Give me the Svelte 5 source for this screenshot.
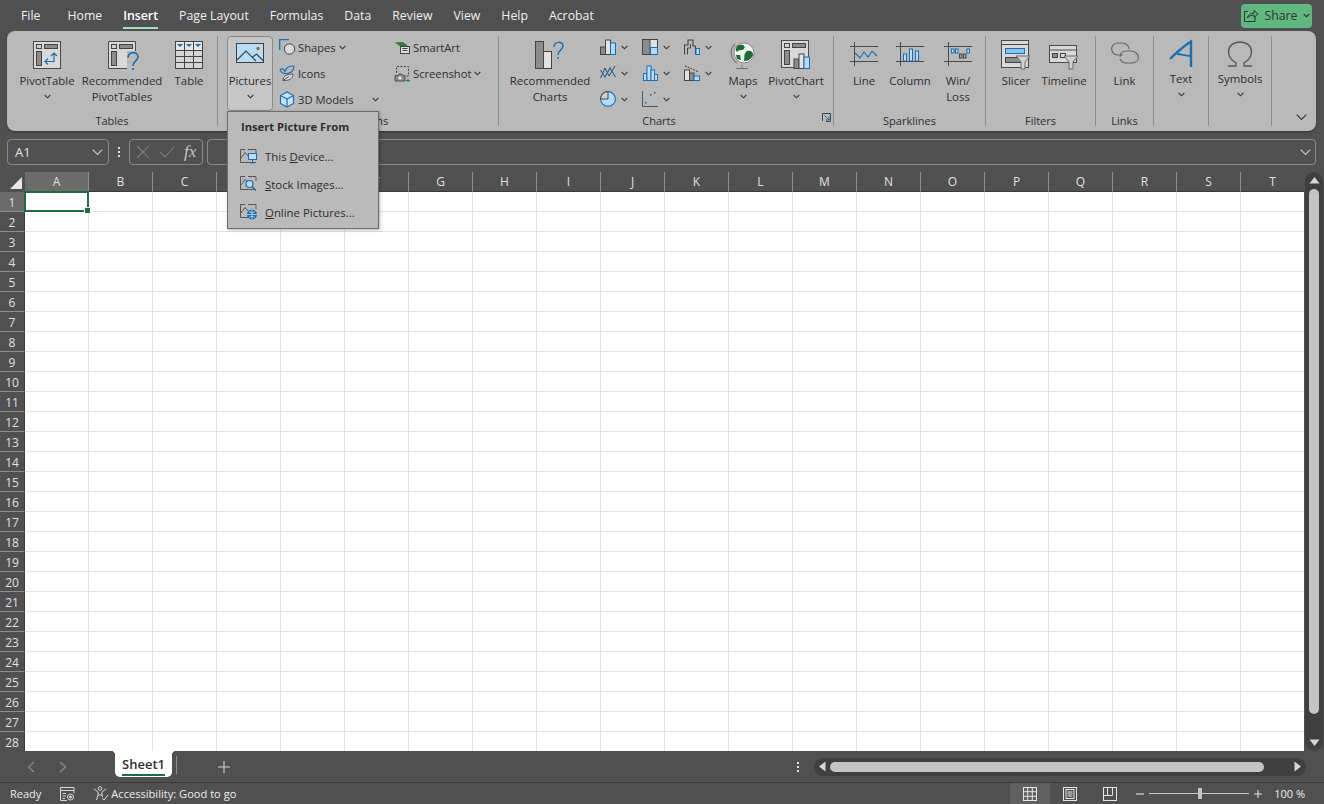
<script>
	const tabs = ['Home', 'Insert', 'Page Layout', 'Formulas', 'Data', 'Review', 'View', 'Help', 'Acrobat'];
	const cols = 'ABCDEFGHIJKLMNOPQRST'.split('');
	const rows = Array.from({ length: 28 }, (_, i) => i + 1);
</script>

{#snippet chev()}
	<svg class="chev" width="7" height="5" viewBox="0 0 7 5"><path d="M.7 1 3.5 3.8 6.3 1" fill="none" stroke="#3a3a3a" stroke-width="1.1" /></svg>
{/snippet}

{#snippet pivotFrame()}
	<rect x="3.5" y="3.5" width="5" height="4" fill="#cfcfcf" stroke="#444" />
	<rect x="11.5" y="3.5" width="13" height="4" fill="#8c8c8c" stroke="#444" />
	<rect x="3.5" y="10.5" width="5" height="14" fill="#8c8c8c" stroke="#444" />
{/snippet}

{#snippet miniPic()}
	<path d="M5 .5H.5V13.5H16" fill="none" stroke="#555" />
	<path d="M1 9 5 3.5 9 8 11 6" fill="none" stroke="#555" />
	<path d="M8 .5H16V5" fill="none" stroke="#555" />
{/snippet}

<div class="app">
	<header class="tabs">
		<span class="tab file">File</span>
		{#each tabs as t}
			<span class="tab" class:active={t === 'Insert'}>{t}</span>
		{/each}
		<button class="share">
			<svg width="16" height="15" viewBox="0 0 16 15" fill="none" stroke="#333"><path d="M5 3.5H1.5V13.5H12V8" /><path d="M4.5 10C5 7 7.5 5 11 5V2.5L15 6 11 9.5V7C8.5 7 6 8 4.5 10Z" /></svg>
			<span>Share</span>
			<svg width="7" height="5" viewBox="0 0 7 5"><path d="M.7 1 3.5 3.8 6.3 1" fill="none" stroke="#333" stroke-width="1.1" /></svg>
		</button>
	</header>

	<section class="ribbon">
		<div class="group tables">
			<div class="items">
				<div class="big w60">
					<svg class="ico" width="28" height="28" viewBox="0 0 28 28">
						<rect x=".5" y=".5" width="27" height="27" fill="#d9d9d9" stroke="#4a4a4a" />
						{@render pivotFrame()}
						<path d="M21 12v8.500H12M18 15l3-3 3 3M15 17.500l-3 3 3 3" fill="none" stroke="#1a6fb0" stroke-width="1.200" />
					</svg>
					<span>PivotTable</span>
					{@render chev()}
				</div>
				<div class="big w90">
					<svg class="ico" width="28" height="28" viewBox="0 0 28 28">
						<rect x=".5" y=".5" width="27" height="27" fill="#d9d9d9" />
						<path d="M27.500 10V.5H.5V27.500H19" fill="none" stroke="#4a4a4a" />
						<rect x="19" y="10" width="13" height="20" fill="#bababa" />
						{@render pivotFrame()}
						<path d="M20 17C20 10 30 10 30 16 30 20 25 20 25 25M25 27v2" fill="none" stroke="#1a6fb0" stroke-width="1.600" />
					</svg>
					<span>Recommended</span>
					<span>PivotTables</span>
				</div>
				<div class="big w44">
					<svg class="ico" width="28" height="28" viewBox="0 0 28 28">
						<rect x=".5" y=".5" width="27" height="27" fill="#d6d6d6" stroke="#444" />
						<rect x="1" y="1" width="26" height="8" fill="#e6e6e6" />
						<path d="M9.500 1V27M18.500 1V27M1 9.500H27M1 15.500H27M1 21.500H27" stroke="#444" fill="none" />
						<path d="M2 3H8L5 6ZM11 3H17L14 6ZM20 3H26L23 6Z" fill="#1a6fb0" />
					</svg>
					<span>Table</span>
				</div>
			</div>
			<div class="label">Tables</div>
		</div>

		<div class="group illus">
			<div class="items">
				<div class="big pictures">
					<svg class="ico" width="28" height="20" viewBox="0 0 28 20">
						<rect x=".5" y=".5" width="27" height="19" fill="#bcdcf6" stroke="#3f3f3f" />
						<path d="M1 17 10 8 20 18M16 14.500 20.500 11 27 17.500" fill="none" stroke="#2c4b66" stroke-width="1.200" />
						<circle cx="22" cy="5.500" r="1.700" fill="#9c6a2a" />
					</svg>
					<span>Pictures</span>
					{@render chev()}
				</div>
				<div class="smalls">
					<div class="small s1">
						<svg width="17" height="16" viewBox="0 0 17 16"><path d="M.7 11V.7H10" fill="none" stroke="#1a6fb0" stroke-width="1.300" /><circle cx="10.500" cy="10" r="5.200" fill="#dbdbdb" stroke="#444" /></svg>
						<span>Shapes</span>
						{@render chev()}
					</div>
					<div class="small s1">
						<svg width="17" height="16" viewBox="0 0 17 16"><path d="M1 5C3 2.500 5 4.500 6 6.500 7 2.500 10 .7 15 1 15 5 13 7 10 8 7 9.500 3 9 1 5Z" fill="none" stroke="#1a6fb0" stroke-width="1.100" /><path d="M4 15.500C4 11 8 9 14 9 14 13 11 16 4 15.500ZM4 15.500 10 11.500" fill="#d8d8d8" stroke="#555" /></svg>
						<span>Icons</span>
					</div>
					<div class="small s1 models">
						<svg width="17" height="17" viewBox="0 0 17 17"><path d="M8 1 14.500 4.500V12.500L8 16 1.500 12.500V4.500Z" fill="#c9e2f6" stroke="#1a6fb0" stroke-width="1.200" /><path d="M1.500 4.500 8 8 14.500 4.500M8 8V16" fill="none" stroke="#1a6fb0" stroke-width="1.200" /></svg>
						<span>3D Models</span>
						{@render chev()}
					</div>
				</div>
				<div class="smalls second">
					<div class="small s2">
						<svg width="17" height="15" viewBox="0 0 17 15"><path d="M.5 2.500 9 2 14 6 9 9 4.500 5Z" fill="#2f7d3b" /><rect x="6.500" y="6.500" width="9" height="7" fill="#dedede" stroke="#444" /><path d="M8.500 8.500h5M8.500 10.500h5" stroke="#444" /></svg>
						<span>SmartArt</span>
					</div>
					<div class="small s2">
						<svg width="17" height="17" viewBox="0 0 17 17"><path d="M2.500 8V1.500H14.500V11H12" fill="none" stroke="#444" stroke-dasharray="2 1.500" /><path d="M1 10.500H4L5 9H8L9 10.500H11V16H1Z" fill="#8a8a8a" stroke="#555" /><circle cx="6" cy="13" r="1.800" fill="#ddd" /><path d="M12 15.500h4M14 13.500v4" stroke="#2f7d3b" /></svg>
						<span>Screenshot</span>
						{@render chev()}
					</div>
				</div>
			</div>
			<div class="label">Illustrations</div>
		</div>

		<div class="group charts">
			<div class="items">
				<div class="big w90 rec">
					<svg class="ico" width="30" height="28" viewBox="0 0 30 28">
						<rect x=".5" y=".5" width="8" height="27" fill="#8c8c8c" stroke="#444" />
						<rect x="8.500" y="10.500" width="8" height="17" fill="#e2e2e2" stroke="#444" />
						<path d="M19 6C19 0 28 0 28 5 28 9 23 9 23 14M23 16v2" fill="none" stroke="#1a6fb0" stroke-width="1.500" />
					</svg>
					<span>Recommended</span>
					<span>Charts</span>
				</div>
				<div class="minis">
					<div class="mini">
						<svg width="16" height="16" viewBox="0 0 16 16"><rect x=".5" y="8" width="5" height="7.500" fill="#8c8c8c" stroke="#444" /><rect x="5.500" y="1" width="5" height="14.500" fill="#e2e2e2" stroke="#444" /><rect x="10.500" y="4" width="5" height="11.500" fill="#b6daf6" stroke="#1a6fb0" /></svg>
						{@render chev()}
					</div>
					<div class="mini">
						<svg width="16" height="16" viewBox="0 0 16 16"><rect x=".5" y=".5" width="15" height="15" fill="#e2e2e2" stroke="#444" /><rect x="1" y="1" width="7" height="14" fill="#8c8c8c" /><path d="M8 .5V15.500" stroke="#444" /><rect x="8.500" y="8.500" width="7" height="7" fill="#b6daf6" stroke="#1a6fb0" /></svg>
						{@render chev()}
					</div>
					<div class="mini">
						<svg width="16" height="16" viewBox="0 0 16 16"><path d="M.5 15.500V6H4V1H9V7H11.500V15.500" fill="none" stroke="#444" stroke-width="1.100" /><path d="M3.500 15.500V9H6.500V5" fill="none" stroke="#444" /><rect x="12" y="9.500" width="3.500" height="6" fill="#b6daf6" stroke="#1a6fb0" /></svg>
						{@render chev()}
					</div>
					<div class="mini">
						<svg width="16" height="16" viewBox="0 0 16 16"><path d="M.5 13 5 3 9 11 15 1" fill="none" stroke="#444" /><path d="M.5 5 5 12 10 3 15.500 12" fill="none" stroke="#1a6fb0" stroke-width="1.200" /></svg>
						{@render chev()}
					</div>
					<div class="mini">
						<svg width="16" height="16" viewBox="0 0 16 16" fill="#bcdcf6" stroke="#1a6fb0"><rect x="1.500" y="8.500" width="3.500" height="7" /><rect x="5" y="1" width="4" height="14.500" /><rect x="9" y="5" width="3.500" height="10.500" /><rect x="12.500" y="9.500" width="3" height="6" /></svg>
						{@render chev()}
					</div>
					<div class="mini">
						<svg width="16" height="16" viewBox="0 0 16 16"><path d="M1 1 15 7" stroke="#444" stroke-dasharray="2 1" fill="none" /><rect x=".5" y="5" width="5" height="10.500" fill="#e2e2e2" stroke="#444" /><rect x="5.500" y="8" width="4.500" height="7.500" fill="#8c8c8c" stroke="#444" /><rect x="10" y="11" width="5.500" height="4.500" fill="#b6daf6" stroke="#1a6fb0" /></svg>
						{@render chev()}
					</div>
					<div class="mini">
						<svg width="16" height="16" viewBox="0 0 16 16"><circle cx="8" cy="8" r="7.400" fill="#b6daf6" stroke="#1a6fb0" stroke-width="1.100" /><path d="M8 8V.6A7.400 7.400 0 0 0 .6 8Z" fill="#cfcfcf" stroke="#444" /></svg>
						{@render chev()}
					</div>
					<div class="mini">
						<svg width="16" height="16" viewBox="0 0 16 16"><path d="M.5 0V15.500H16" fill="none" stroke="#555" /><g fill="#94c4e8"><rect x="6" y="8" width="2" height="1.500" /><rect x="9" y="6" width="2" height="1.500" /></g><g fill="#555"><rect x="3" y="11" width="1.500" height="1.500" /><rect x="12" y="1" width="1.500" height="1.500" /><rect x="8" y="3" width="1.500" height="1.500" /></g></svg>
						{@render chev()}
					</div>
				</div>
				<div class="big w34 maps">
					<svg class="ico" width="26" height="30" viewBox="0 0 26 30">
						<path d="M5 4A12 12 0 0 0 7 23" fill="none" stroke="#777" stroke-width="1.200" />
						<path d="M12 25V28M6 28.500H18" stroke="#777" fill="none" />
						<circle cx="14" cy="13" r="10" fill="#eef3ee" stroke="#888" />
						<path d="M9 5C13 4 16 6 14 9 12 11 9 9 7 12 5 10 6 6 9 5ZM17 11C21 10 23 12 23 15 21 20 17 21 14 21 15 18 13 14 17 11ZM6 15 10 15 11 20 7 19Z" fill="#1d6b34" />
					</svg>
					<span>Maps</span>
					{@render chev()}
				</div>
				<div class="big w64 pchart">
					<svg class="ico" width="30" height="30" viewBox="0 0 30 30">
						<rect x=".5" y=".5" width="27" height="27" fill="#d9d9d9" stroke="#4a4a4a" />
						{@render pivotFrame()}
						<rect x="13" y="19" width="5" height="9.500" fill="#8c8c8c" stroke="#444" />
						<rect x="18" y="14" width="5" height="14.500" fill="#e2e2e2" stroke="#444" />
						<rect x="23" y="17" width="5.500" height="11.500" fill="#b6daf6" stroke="#1a6fb0" />
					</svg>
					<span>PivotChart</span>
					{@render chev()}
				</div>
				<svg class="launcher" width="9" height="9" viewBox="0 0 9 9" fill="none" stroke="#444"><path d="M.5 8V.5H8.500V8.500H4" /><path d="M2.500 2.500 7 7M7 3.500V7H3.500" stroke="#1a6fb0" /></svg>
			</div>
			<div class="label charts-label">Charts</div>
		</div>

		<div class="group sparks">
			<div class="items">
				<div class="big w44">
					<svg class="ico spark" width="28" height="24" viewBox="0 0 28 24" fill="none">
						<path d="M0 4.500H28M0 19.500H28M4.500 0V24" stroke="#4a4a4a" />
						<path d="M5 11 10 16 14 10 18 15 22 9 27 14" stroke="#1a6fb0" stroke-width="1.100" />
					</svg>
					<span>Line</span>
				</div>
				<div class="big w48">
					<svg class="ico spark" width="28" height="24" viewBox="0 0 28 24" fill="none">
						<path d="M0 4.500H28M0 19.500H28M4.500 0V24" stroke="#4a4a4a" />
						<g fill="#bcdcf6" stroke="#1a6fb0"><rect x="7.500" y="12" width="3" height="7" /><rect x="13.500" y="7" width="3" height="12" /><rect x="19.500" y="9" width="3" height="10" /></g>
					</svg>
					<span>Column</span>
				</div>
				<div class="big w48">
					<svg class="ico spark" width="28" height="24" viewBox="0 0 28 24" fill="none">
						<path d="M0 4.500H28M0 19.500H28M4.500 0V24" stroke="#4a4a4a" />
						<g fill="#bcdcf6" stroke="#1a6fb0"><rect x="7.500" y="7" width="2.500" height="4" /><rect x="11.500" y="7" width="2.500" height="4" /><rect x="23" y="7" width="2.500" height="4" /></g>
						<g fill="#a0a0a0" stroke="#444"><rect x="15.500" y="12" width="2.500" height="4" /><rect x="19.500" y="12" width="2.500" height="4" /></g>
					</svg>
					<span>Win/</span>
					<span>Loss</span>
				</div>
			</div>
			<div class="label">Sparklines</div>
		</div>

		<div class="group filters">
			<div class="items">
				<div class="big w44">
					<svg class="ico" width="30" height="30" viewBox="0 0 30 30">
						<rect x=".5" y=".5" width="27" height="27" fill="#d9d9d9" stroke="#4a4a4a" />
						<path d="M1 4.500H27" stroke="#4a4a4a" />
						<rect x="4.500" y="8.500" width="19" height="5" fill="#8fc4ee" stroke="#1a6fb0" />
						<rect x="4.500" y="17.500" width="15" height="5" fill="#8c8c8c" stroke="#444" />
						<path d="M15 16H29L24 22V29H20V22Z" fill="#d0d0d0" stroke="#6a6a6a" />
					</svg>
					<span>Slicer</span>
				</div>
				<div class="big w52">
					<svg class="ico timeline" width="30" height="25" viewBox="0 0 30 25">
						<rect x=".5" y=".5" width="27" height="17" fill="#d9d9d9" stroke="#4a4a4a" />
						<path d="M1 5H27" stroke="#4a4a4a" />
						<rect x="3.500" y="8.500" width="5" height="4" fill="#8c8c8c" stroke="#444" />
						<rect x="11.500" y="8.500" width="5" height="4" fill="#d9d9d9" stroke="#444" />
						<path d="M15 11H29L24 17V24H20V17Z" fill="#d0d0d0" stroke="#6a6a6a" />
					</svg>
					<span>Timeline</span>
				</div>
			</div>
			<div class="label">Filters</div>
		</div>

		<div class="group links">
			<div class="items center">
				<div class="big">
					<svg class="ico spark" width="28" height="24" viewBox="0 0 28 24" fill="none" stroke="#666" stroke-width="1.200">
						<path d="M12 13H7C3 13 .6 10 .6 7S3 1 7 1H11C15 1 18 3.500 18 7" />
						<path d="M9 15C9 11 12 9 16 9H20C24 9 27.400 12 27.400 15.500S24 21 20 21H15C12 21 10 19 9 17" />
					</svg>
					<span>Link</span>
				</div>
			</div>
			<div class="label">Links</div>
		</div>

		<div class="group text">
			<div class="items center">
				<div class="big tall">
					<svg class="ico" width="24" height="28" viewBox="0 0 24 28" fill="none" stroke="#1a6fb0" stroke-width="2.400">
						<path d="M1 19C8 12 15 6 22 1.500V27" />
						<path d="M8 14C12 14.500 17 15.500 21.500 16" stroke-width="1.800" />
					</svg>
					<span>Text</span>
					{@render chev()}
				</div>
			</div>
		</div>

		<div class="group symbols">
			<div class="items center">
				<div class="big tall">
					<svg class="ico" width="26" height="26" viewBox="0 0 26 26" fill="none" stroke="#5a5a5a" stroke-width="1.400">
						<path d="M1 25H9V22C4 19 1.500 16 1.500 11 1.500 5 6 1 13 1S24.500 5 24.500 11C24.500 16 22 19 17 22V25H25" />
					</svg>
					<span>Symbols</span>
					{@render chev()}
				</div>
			</div>
		</div>

		<div class="collapse">
			<svg width="11" height="7" viewBox="0 0 11 7"><path d="M.7.7 5.500 5.500 10.300.7" fill="none" stroke="#333" stroke-width="1.100" /></svg>
		</div>
	</section>

	<div class="formula">
		<div class="namebox">
			<span>A1</span>
			<svg width="11" height="7" viewBox="0 0 11 7"><path d="M.7.7 5.500 5.500 10.300.7" fill="none" stroke="#ccc" stroke-width="1.100" /></svg>
		</div>
		<div class="dots"><i></i><i></i><i></i></div>
		<div class="fxbox">
			<svg width="14" height="14" viewBox="0 0 14 14"><path d="M1 1 13 13M13 1 1 13" stroke="#7c7c7c" stroke-width="1.100" /></svg>
			<svg width="16" height="12" viewBox="0 0 16 12"><path d="M1 6 6 11 15 1" fill="none" stroke="#7c7c7c" stroke-width="1.100" /></svg>
			<span class="fx">fx</span>
		</div>
		<div class="input">
			<svg width="11" height="7" viewBox="0 0 11 7"><path d="M.7.7 5.500 5.500 10.300.7" fill="none" stroke="#ccc" stroke-width="1.100" /></svg>
		</div>
	</div>

	<main class="sheet">
		<div class="grid">
			<div class="corner"><svg width="12" height="12" viewBox="0 0 12 12"><path d="M12 0V12H0Z" fill="#e6e6e6" /></svg></div>
			{#each cols as c}
				<div class="colhead" class:on={c === 'A'}>{c}</div>
			{/each}
			{#each rows as r}
				<div class="rowhead" class:on={r === 1}>{r}</div>
				{#each cols as c}
					<div class="cell">
						{#if r === 1 && c === 'A'}<div class="selected"></div>{/if}
					</div>
				{/each}
			{/each}
		</div>
		<div class="vscroll">
			<svg width="11" height="8" viewBox="0 0 11 8"><path d="M5.500 1 10.500 7.500H.5Z" fill="#d6d6d6" /></svg>
			<div class="vthumb"></div>
			<svg width="11" height="8" viewBox="0 0 11 8"><path d="M5.500 7 10.500.5H.5Z" fill="#d6d6d6" /></svg>
		</div>
	</main>

	<div class="sheetbar">
		<svg class="nav" width="8" height="12" viewBox="0 0 8 12"><path d="M7 1 1.500 6 7 11" fill="none" stroke="#8f8f8f" stroke-width="1.100" /></svg>
		<svg class="nav next" width="8" height="12" viewBox="0 0 8 12"><path d="M1 1 6.500 6 1 11" fill="none" stroke="#8f8f8f" stroke-width="1.100" /></svg>
		<div class="sheettab"><span>Sheet1</span></div>
		<div class="tabsep"></div>
		<svg class="plus" width="12" height="12" viewBox="0 0 12 12"><path d="M6 0V12M0 6H12" stroke="#d0d0d0" stroke-width="1.100" /></svg>
		<div class="dots bar"><i></i><i></i><i></i></div>
		<div class="hscroll">
			<svg width="8" height="11" viewBox="0 0 8 11"><path d="M1 5.500 7.500.5V10.500Z" fill="#d6d6d6" /></svg>
			<div class="hthumb"></div>
			<svg width="8" height="11" viewBox="0 0 8 11"><path d="M7 5.500 .5.5V10.500Z" fill="#d6d6d6" /></svg>
		</div>
	</div>

	<footer class="status">
		<span class="ready">Ready</span>
		<svg class="macro" width="15" height="14" viewBox="0 0 15 14" fill="none" stroke="#d8d8d8"><path d="M7 13.500H.5V.5H14V6" /><path d="M1 3.500H14M2.500 6.500H6M2.500 9H6M2.500 11.500H5" /><circle cx="10.500" cy="10" r="3" fill="#555" /><circle cx="10.500" cy="10" r="1" fill="#d8d8d8" /></svg>
		<svg class="person" width="16" height="15" viewBox="0 0 16 15" fill="none" stroke="#d8d8d8"><circle cx="7" cy="2.500" r="1.800" /><path d="M1 3 5 6V9L3.500 14M13 3 9 6V9M5 9H9L9.500 11" /><path d="M9 12 11 14 15 9" /></svg>
		<span class="a11y">Accessibility: Good to go</span>
		<div class="views">
			<div class="view on">
				<svg width="14" height="14" viewBox="0 0 14 14" fill="none" stroke="#e6e6e6"><rect x=".5" y=".5" width="13" height="13" /><path d="M4.700 0V14M9.300 0V14M0 4.700H14M0 9.300H14" /></svg>
			</div>
			<div class="view">
				<svg width="14" height="14" viewBox="0 0 14 14" fill="none" stroke="#e6e6e6"><rect x=".5" y=".5" width="13" height="13" /><rect x="3" y="2.500" width="8" height="9" /><path d="M4.500 5H9.500M4.500 7H9.500M4.500 9H9.500" /></svg>
			</div>
			<div class="view">
				<svg width="14" height="14" viewBox="0 0 14 14" fill="none" stroke="#e6e6e6"><rect x=".5" y=".5" width="13" height="13" /><path d="M.5 8.500H9.500V0M4.500 0V8" /></svg>
			</div>
		</div>
		<div class="zoombar">
			<svg width="8" height="8" viewBox="0 0 8 8"><path d="M0 4H8" stroke="#e0e0e0" stroke-width="1.100" /></svg>
			<div class="slider"><div class="knob"></div></div>
			<svg width="8" height="8" viewBox="0 0 8 8"><path d="M0 4H8M4 0V8" stroke="#e0e0e0" stroke-width="1.100" /></svg>
		</div>
		<span class="pct">100 %</span>
	</footer>

	<div class="popup">
		<div class="poptitle">Insert Picture From</div>
		<div class="popitem">
			<svg width="17" height="15" viewBox="0 0 17 15">
				{@render miniPic()}
				<rect x="8.500" y="4.500" width="8" height="6" fill="#bcdcf6" stroke="#1a6fb0" /><path d="M12.500 10.500V13.500M10.500 14H14.500" stroke="#1a6fb0" />
			</svg>
			<span>This <u>D</u>evice...</span>
		</div>
		<div class="popitem">
			<svg width="17" height="16" viewBox="0 0 17 16">
				{@render miniPic()}
				<circle cx="9.500" cy="8" r="3.500" fill="#bcdcf6" stroke="#1a6fb0" stroke-width="1.200" /><path d="M12 10.500 16 14.500" stroke="#1a6fb0" stroke-width="1.400" />
			</svg>
			<span><u>S</u>tock Images...</span>
		</div>
		<div class="popitem">
			<svg width="17" height="16" viewBox="0 0 17 16">
				{@render miniPic()}
				<circle cx="12" cy="10.500" r="5" fill="#1a6fb0" /><path d="M7 10.500H17M12 5.500V15.500M9 7.500C11 9 13 9 15 7.500M9 13.500C11 12 13 12 15 13.500" stroke="#d6e8f6" stroke-width=".7" fill="none" />
			</svg>
			<span><u>O</u>nline Pictures...</span>
		</div>
	</div>
</div>

<style>
	:global(body) {
		margin: 0;
		background: #505050;
	}

	.app {
		position: relative;
		width: 1324px;
		height: 804px;
		overflow: hidden;
		display: flex;
		flex-direction: column;
		background: #505050;
		font-family: 'Open Sans', 'Noto Sans', sans-serif;
		font-size: 12px;
		color: #2e2e2e;
	}

	.tabs {
		height: 31px;
		flex: none;
		display: flex;
		align-items: center;
		gap: 21px;
		padding: 1px 0 0 21px;
		box-sizing: border-box;
		font-size: 12.300px;
		color: #efefef;
	}

	.tab {
		position: relative;
		line-height: 30px;
	}

	.tab.file {
		margin-right: 6px;
	}

	.tab.active {
		font-weight: 600;
		color: #fff;
	}

	.tab.active::after {
		content: '';
		position: absolute;
		left: 0;
		right: 0;
		bottom: 2px;
		height: 2px;
		background: #a3dcc0;
	}

	.share {
		margin: -1px 12px 0 auto;
		width: 71px;
		height: 24px;
		padding: 0;
		display: flex;
		align-items: center;
		justify-content: center;
		gap: 5px;
		border: 0;
		border-radius: 4px;
		background: #5fb87f;
		color: #333;
		font: inherit;
	}

	.ribbon {
		height: 100px;
		flex: none;
		margin: 0 8px 0 7px;
		border-radius: 8px;
		background: #b9b9b9;
		display: flex;
		box-shadow: 0 1px 2px rgba(0, 0, 0, 0.35);
	}

	.group {
		position: relative;
		height: 90px;
		margin-top: 5px;
		display: flex;
		flex-direction: column;
		box-sizing: border-box;
		border-right: 1px solid #8e8e8e;
	}

	.tables { width: 211px; }
	.illus { width: 281px; }
	.charts { width: 335px; }
	.sparks { width: 152px; }
	.filters { width: 110px; }
	.links { width: 58px; }
	.text { width: 55px; }
	.symbols { width: 63px; }

	.items {
		flex: 1;
		display: flex;
		min-height: 0;
	}

	.items.center {
		justify-content: center;
	}

	.tables .items { padding-left: 10px; }
	.illus .items { padding-left: 9px; }
	.charts .items { padding-left: 6px; position: relative; }
	.sparks .items { padding-left: 8px; }
	.filters .items { padding-left: 8px; }

	.label {
		height: 10px;
		line-height: 10px;
		text-align: center;
		white-space: nowrap;
		font-size: 11px;
	}

	.charts-label {
		padding-right: 14px;
	}

	.big {
		display: flex;
		flex-direction: column;
		align-items: center;
		box-sizing: border-box;
		padding-top: 4px;
		font-size: 11.400px;
		line-height: 16px;
		white-space: nowrap;
		flex: none;
	}

	.big .ico {
		height: 30px;
		margin-bottom: 3px;
		overflow: visible;
		flex: none;
	}

	.big .chev {
		margin-top: 5px;
	}

	.big.tall .ico {
		height: 28px;
		margin-bottom: 3px;
	}

	.big .spark {
		height: 24px;
		margin: 2px 0 7px;
	}

	.big .timeline {
		height: 25px;
		margin: 5px 0 3px;
	}

	.w34 { width: 34px; }
	.w44 { width: 44px; }
	.w48 { width: 48px; }
	.w52 { width: 52px; }
	.w60 { width: 60px; }
	.w64 { width: 64px; }
	.w90 { width: 90px; }

	.pictures {
		width: 46px;
		height: 75px;
		padding-top: 6px;
		background: #c6c6c6;
		border: 1px solid #8a8a8a;
		border-radius: 4px;
	}

	.pictures .ico {
		height: 20px;
		margin-bottom: 10px;
	}

	.smalls {
		margin: -2px 0 0 6px;
		width: 109px;
		display: flex;
		flex-direction: column;
	}

	.small {
		height: 26px;
		display: flex;
		align-items: center;
		gap: 2px;
		font-size: 11.200px;
		white-space: nowrap;
	}

	.small svg:first-child {
		flex: none;
	}

	.small .chev {
		margin-left: 1px;
	}

	.models .chev {
		margin-left: auto;
		margin-right: 9px;
	}

	.smalls.second {
		margin-left: 6px;
		width: 100px;
	}

	.minis {
		width: 126px;
		height: 78px;
		margin-left: 5px;
		display: grid;
		grid-template-columns: repeat(3, 42px);
		grid-auto-rows: 26px;
		margin-top: -2px;
	}

	.mini {
		display: flex;
		align-items: center;
		gap: 5px;
	}

	.pchart {
		margin-left: 4px;
	}

	.launcher {
		position: absolute;
		right: 2px;
		bottom: -6px;
	}

	.collapse {
		flex: 1;
		display: flex;
		justify-content: flex-end;
		align-items: flex-end;
		padding: 0 9px 10px 0;
	}

	.formula {
		height: 26px;
		flex: none;
		margin: 8px 8px 7px 7px;
		display: flex;
		color: #e4e4e4;
	}

	.namebox,
	.fxbox,
	.input {
		box-sizing: border-box;
		border: 1px solid #8a8a8a;
		border-radius: 4px;
		display: flex;
		align-items: center;
	}

	.namebox {
		width: 102px;
		padding: 0 5px 0 7px;
		justify-content: space-between;
		font-size: 13px;
	}

	.dots {
		width: 20px;
		display: flex;
		flex-direction: column;
		align-items: center;
		justify-content: center;
		gap: 2px;
	}

	.dots i {
		width: 2px;
		height: 2px;
		background: #e0e0e0;
	}

	.fxbox {
		width: 74px;
		padding-left: 6px;
		gap: 9px;
		margin-right: 4px;
	}

	.fx {
		font-family: 'Liberation Serif', serif;
		font-style: italic;
		font-size: 17px;
		color: #c8c8c8;
	}

	.input {
		flex: 1;
		justify-content: flex-end;
		padding-right: 4px;
	}

	.sheet {
		flex: 1;
		min-height: 0;
		display: flex;
	}

	.grid {
		width: 1304px;
		flex: none;
		overflow: hidden;
		display: grid;
		grid-template-columns: 25px repeat(20, 64px);
		grid-auto-rows: 20px;
		background: #fff;
	}

	.corner,
	.colhead,
	.rowhead {
		background: #505050;
		color: #e0e0e0;
		display: flex;
		align-items: center;
		justify-content: center;
		box-sizing: border-box;
	}

	.corner {
		justify-content: flex-end;
		align-items: flex-end;
		padding: 0 3px 3px 0;
	}

	.colhead {
		border-right: 1px solid #8e8e8e;
		border-bottom: 1px solid #3a3a3a;
	}

	.rowhead {
		padding-top: 1px;
		border-bottom: 1px solid #8e8e8e;
		border-right: 1px solid #3a3a3a;
	}

	.colhead.on,
	.rowhead.on {
		background: #6b6b6b;
	}

	.cell {
		position: relative;
		box-sizing: border-box;
		border-right: 1px solid #e1e1e1;
		border-bottom: 1px solid #e1e1e1;
	}

	.selected {
		position: absolute;
		inset: -1px -1px -1px -1px;
		border: 2px solid #1f6b42;
		z-index: 1;
	}

	.selected::after {
		content: '';
		position: absolute;
		right: -4px;
		bottom: -4px;
		width: 5px;
		height: 5px;
		background: #1f6b42;
		border: 1px solid #fff;
	}

	.vscroll {
		width: 18px;
		margin-left: 1px;
		border-radius: 9px;
		background: #3f3f3f;
		display: flex;
		flex-direction: column;
		align-items: center;
		justify-content: space-between;
		padding: 4px 0;
		box-sizing: border-box;
	}

	.vthumb {
		flex: 1;
		width: 10px;
		margin: 5px 0 25px;
		border-radius: 5px;
		background: #c4c4c4;
	}

	.sheetbar {
		height: 32px;
		flex: none;
		display: flex;
		align-items: center;
		box-sizing: border-box;
		border-bottom: 1px solid #3d3d3d;
	}

	.nav {
		margin-left: 27px;
		flex: none;
	}

	.nav.next {
		margin-left: 24px;
	}

	.sheettab {
		position: relative;
		align-self: flex-start;
		margin-left: 48px;
		width: 57px;
		height: 26px;
		background: #fff;
		border-radius: 0 0 5px 5px;
		display: flex;
		justify-content: center;
		font-size: 13px;
		font-weight: 600;
		color: #2e2e2e;
	}

	.sheettab::before,
	.sheettab::after {
		content: '';
		position: absolute;
		top: 0;
		width: 4px;
		height: 4px;
	}

	.sheettab::before {
		left: -4px;
		background: radial-gradient(circle at 0 100%, transparent 4px, #fff 4px);
	}

	.sheettab::after {
		right: -4px;
		background: radial-gradient(circle at 100% 100%, transparent 4px, #fff 4px);
	}

	.sheettab span {
		height: 23px;
		line-height: 26px;
		border-bottom: 2px solid #1f6b42;
	}

	.tabsep {
		width: 1px;
		height: 18px;
		margin: 0 0 4px 4px;
		background: #8e8e8e;
	}

	.plus {
		margin-left: 41px;
		flex: none;
	}

	.dots.bar {
		width: 8px;
		margin-left: 564px;
		flex: none;
	}

	.hscroll {
		width: 492px;
		height: 18px;
		margin-left: 12px;
		border-radius: 9px;
		background: #3f3f3f;
		display: flex;
		align-items: center;
		justify-content: space-between;
		box-sizing: border-box;
		padding: 0 4px;
	}

	.hthumb {
		width: 434px;
		height: 10px;
		border-radius: 5px;
		background: #c4c4c4;
		margin-left: 4px;
		margin-right: auto;
	}

	.status {
		height: 21px;
		flex: none;
		display: flex;
		align-items: center;
		font-size: 11px;
		color: #ececec;
	}

	.ready { margin-left: 10px; }
	.macro { margin-left: 19px; flex: none; }
	.person { margin-left: 18px; flex: none; }
	.a11y { margin-left: 2px; font-size: 11.100px; }

	.views {
		margin-left: auto;
		display: flex;
		height: 100%;
	}

	.view {
		width: 40px;
		display: flex;
		align-items: center;
		justify-content: center;
	}

	.view.on {
		background: #606060;
	}

	.zoombar {
		margin-left: 6px;
		display: flex;
		align-items: center;
		gap: 5px;
	}

	.slider {
		position: relative;
		width: 100px;
		height: 1px;
		background: #c8c8c8;
	}

	.knob {
		position: absolute;
		left: 49px;
		top: -5px;
		width: 4px;
		height: 11px;
		background: #c4c4c4;
	}

	.pct {
		width: 62px;
		padding-right: 19px;
		box-sizing: border-box;
		text-align: right;
		white-space: nowrap;
	}

	.popup {
		position: absolute;
		left: 227px;
		top: 111px;
		width: 152px;
		height: 118px;
		box-sizing: border-box;
		background: #bababa;
		border: 1px solid #6e6e6e;
		box-shadow: 1px 1px 3px rgba(0, 0, 0, 0.3);
		z-index: 5;
	}

	.poptitle {
		font-weight: 700;
		font-size: 11.200px;
		padding-top: 7px;
		padding-left: 13px;
		height: 30px;
		box-sizing: border-box;
		line-height: 16px;
	}

	.popitem {
		height: 28px;
		display: flex;
		align-items: center;
		gap: 8px;
		font-size: 11.400px;
		padding-left: 12px;
		white-space: nowrap;
	}

	.popitem svg {
		flex: none;
	}
</style>
